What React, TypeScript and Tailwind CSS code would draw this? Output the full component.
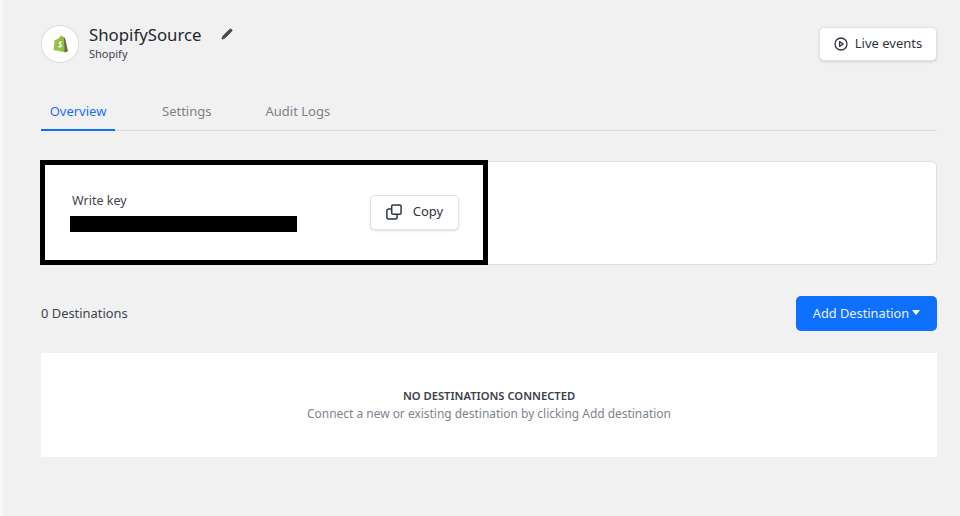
import React from "react";
import { Pencil } from "lucide-react";

function ShopifyLogo() {
  return (
    <svg width="16" height="18" viewBox="0 0 16 18" className="ml-[1px]">
      <path d="M1.6 5.2 6 3.6C6.6 1.4 7.6.6 8.8.8c.6.1 1 .5 1.2 1.2l1 .1L12 17.2 0.6 15z" fill="#95bf47" />
      <path d="M10.8 2.2 12 3 15 16.2 11.6 17.6z" fill="#5b6b4a" />
      <path
        d="M8.6 6.6c-.6-.3-2.6-.5-2.9 1.1-.3 1.6 2 1.9 1.8 3-.1.6-1 .8-2 .1l-.4 1.3c1.6.9 3.6.4 3.8-1.3.2-1.7-2-2-1.8-2.9.1-.5.9-.6 1.9-.2z"
        fill="#fff"
      />
    </svg>
  );
}

function PlayCircle() {
  return (
    <svg width="14" height="14" viewBox="0 0 14 14" fill="none" stroke="#2f3540" strokeWidth="1.3">
      <circle cx="7" cy="7" r="6" />
      <path d="M5.6 4.6 9.3 7 5.6 9.4z" strokeLinejoin="round" />
    </svg>
  );
}

function CopyIcon() {
  return (
    <svg width="16" height="16" viewBox="0 0 16 16" fill="none" stroke="#2f3540" strokeWidth="1.5">
      <rect x="5.7" y="0.9" width="9.4" height="9.4" rx="1.4" />
      <path d="M5.7 5H2.4C1.6 5 .9 5.7.9 6.5v7.1c0 .8.7 1.5 1.5 1.5h7.1c.8 0 1.5-.7 1.5-1.5v-3.3" />
    </svg>
  );
}

export default function App() {
  return (
    <div className="h-[516px] w-[960px] overflow-hidden bg-[#f8f8f8] pl-[3px] font-['Noto_Sans',sans-serif]">
      <div className="h-full bg-[#f1f1f1] pl-[38px] pr-[23px] pt-[25px]">
        <div className="flex items-start justify-between">
          <div className="flex items-center">
            <div className="flex h-[38px] w-[38px] items-center justify-center rounded-full border border-[#dcdcdc] bg-white">
              <ShopifyLogo />
            </div>
            <div className="-mt-[4px] ml-[10px]">
              <div className="flex items-center">
                <span className="text-[16.8px] leading-[21px] text-[#23282f]">ShopifySource</span>
                <Pencil className="ml-[19px] h-[12px] w-[12px] fill-[#4a4f58] text-[#4a4f58]" />
              </div>
              <div className="mt-[1px] text-[11px] leading-[15px] text-[#3d434c]">Shopify</div>
            </div>
          </div>
          <button className="mt-[2px] flex h-[34px] w-[118px] items-center justify-center gap-[7px] rounded-[5px] border border-[#dfe3e8] bg-white text-[13px] text-[#2f3540] shadow-sm">
            <PlayCircle />
            Live events
          </button>
        </div>

        <div className="mt-[35px] flex h-[33px] border-b border-[#d7dbe0] text-[13px]">
          <div className="h-[33px] w-[74px] border-b-2 border-[#0f6fff] pt-[4px] text-center leading-[18px] text-[#1a6eff]">
            Overview
          </div>
          <div className="ml-[47px] pt-[4px] leading-[18px] text-[#7b828c]">Settings</div>
          <div className="ml-[54px] pt-[4px] leading-[18px] text-[#7b828c]">Audit Logs</div>
        </div>

        <div className="mt-[30px] h-[104px] rounded-[5px] border border-[#dce0e5] bg-white">
          <div className="-ml-[2px] -mt-[2px] flex h-[105px] w-[448px] items-center justify-between border-[5px] border-black bg-white pl-[25px] pr-[24px]">
            <div>
              <div className="ml-[2px] text-[12.5px] leading-[17px] text-[#3f4550]">Write key</div>
              <div className="mb-[1px] mt-[7px] h-[16px] w-[227px] bg-black" />
            </div>
            <button className="-mt-[1px] flex h-[35px] w-[89px] items-center justify-center gap-[11px] rounded-[5px] border border-[#dfe3e8] bg-white text-[13px] text-[#2f3540] shadow-sm">
              <CopyIcon />
              Copy
            </button>
          </div>
        </div>

        <div className="mt-[31px] flex items-center justify-between">
          <span className="text-[12.9px] text-[#3f4550]">0 Destinations</span>
          <button className="flex h-[35px] w-[141px] items-center justify-center gap-[3px] rounded-[5px] bg-[#0f6fff] text-[12.8px] text-[#e8f0ff]">
            Add Destination
            <span className="-mt-[2px] h-0 w-0 border-x-[4.5px] border-t-[5px] border-x-transparent border-t-white" />
          </button>
        </div>

        <div className="mt-[22px] flex h-[104px] flex-col items-center justify-center bg-white">
          <div className="text-[11.2px] font-semibold leading-[15px] text-[#3a404a]">NO DESTINATIONS CONNECTED</div>
          <div className="mt-[2px] text-[11.95px] leading-[17px] text-[#7d848e]">
            Connect a new or existing destination by clicking Add destination
          </div>
        </div>
      </div>
    </div>
  );
}
